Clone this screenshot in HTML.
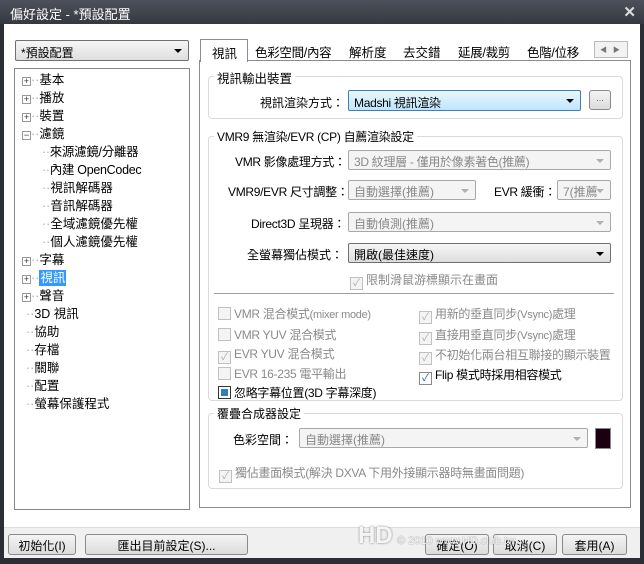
<!DOCTYPE html>
<html><head><meta charset="utf-8"><style>
*{box-sizing:border-box;margin:0;padding:0}
body{width:644px;height:564px;overflow:hidden;background:#2b2e35;font-family:"Liberation Sans","Noto Sans CJK TC",sans-serif;font-size:12px;color:#000;position:relative}
.a{position:absolute;white-space:nowrap}
.n{letter-spacing:-0.3px}
#title{left:0;top:0;width:644px;height:24px;background:linear-gradient(#4d515b,#353840);color:#fff;font-size:13px;padding:4px 0 0 10px}
#inner{left:4px;top:24px;width:636px;height:534px;background:#fff}
#bot{left:4px;top:527px;width:636px;height:31px;background:#f0f0f0;border-top:1px solid #dcdcdc}
.combo{border:1px solid #a8a8a8;border-radius:2px;background:#f4f4f4;padding:2px 5px;color:#888;height:20px}
.combo:after{content:"";position:absolute;right:6px;top:8px;border:4px solid transparent;border-top:4px solid #b0b0b0}
.combo.on{color:#000;border-color:#707070;background:linear-gradient(#f6f6f6,#dedede)}
.combo.on:after{border-top-color:#000}
.grp{border:1px solid #dadada;border-radius:4px}
.gl{background:#fff;padding:0 3px}
.btn{border:1px solid #8a8a8a;border-radius:3px;background:linear-gradient(#f4f4f4,#dcdcdc);text-align:center;height:20px;padding-top:2px}
.cb{width:13px;height:13px;border:1px solid #c0c0c0;background:#f4f4f4;display:inline-block;vertical-align:-2px;margin-right:3px;position:relative;font-size:10px;line-height:11px;text-align:center;color:#aaa;letter-spacing:0}
.g{color:#8a8a8a}
.tree{font-size:12.5px}
.pm{width:9px;height:9px;border:1px solid #999;display:inline-block;font-size:9px;line-height:7px;text-align:center;color:#333;background:#fff}
</style></head><body>
<div class="a" id="title">偏好設定 - *預設配置</div>
<div class="a" style="right:8px;top:3px;color:#ddd;font-size:15px;font-weight:bold">✕</div>
<div class="a" id="inner"></div>
<div class="a" id="bot"></div>

<div class="a combo on" style="left:15px;top:40px;width:174px;height:21px;padding-top:3px">*預設配置</div>
<div class="a" style="left:14px;top:68px;width:176px;height:442px;border:1px solid #828790;background:#fff"></div>
<div class="a tree" style="left:22px;top:71px;line-height:18px">
<div><span class="pm">+</span><span style="color:#aaa">··</span>基本</div>
<div><span class="pm">+</span><span style="color:#aaa">··</span>播放</div>
<div><span class="pm">+</span><span style="color:#aaa">··</span>裝置</div>
<div><span class="pm">−</span><span style="color:#aaa">··</span>濾鏡</div>
<div style="padding-left:20px" class="n"><span style="color:#aaa">··</span>來源濾鏡/分離器</div>
<div style="padding-left:20px" class="n"><span style="color:#aaa">··</span>內建 OpenCodec</div>
<div style="padding-left:20px"><span style="color:#aaa">··</span>視訊解碼器</div>
<div style="padding-left:20px"><span style="color:#aaa">··</span>音訊解碼器</div>
<div style="padding-left:20px"><span style="color:#aaa">··</span>全域濾鏡優先權</div>
<div style="padding-left:20px"><span style="color:#aaa">··</span>個人濾鏡優先權</div>
<div><span class="pm">+</span><span style="color:#aaa">··</span>字幕</div>
<div><span class="pm">+</span><span style="color:#aaa">··</span><span style="background:#3399ff;color:#fff;display:inline-block;line-height:16px;padding:0 1px">視訊</span></div>
<div><span class="pm">+</span><span style="color:#aaa">··</span>聲音</div>
<div style="padding-left:4px"><span style="color:#aaa">··</span>3D 視訊</div>
<div style="padding-left:4px"><span style="color:#aaa">··</span>協助</div>
<div style="padding-left:4px"><span style="color:#aaa">··</span>存檔</div>
<div style="padding-left:4px"><span style="color:#aaa">··</span>關聯</div>
<div style="padding-left:4px"><span style="color:#aaa">··</span>配置</div>
<div style="padding-left:4px"><span style="color:#aaa">··</span>螢幕保護程式</div>
</div>

<!-- tabs -->
<div class="a" style="left:199px;top:60px;width:432px;height:448px;border:1px solid #898c95;background:#fff"></div>
<div class="a" style="left:200px;top:39px;width:48px;height:23px;border:1px solid #898c95;border-bottom:none;background:#fff;padding:3px 0 0 11px;font-size:12.5px">視訊</div>
<div class="a n" style="left:255px;top:42px;font-size:12.5px">色彩空間/內容</div>
<div class="a" style="left:349px;top:42px;font-size:12.5px">解析度</div>
<div class="a" style="left:403px;top:42px;font-size:12.5px">去交錯</div>
<div class="a n" style="left:458px;top:42px;font-size:12.5px">延展/裁剪</div>
<div class="a n" style="left:527px;top:42px;font-size:12.5px">色階/位移</div>
<div class="a" style="left:594px;top:41px;width:34px;height:17px;border:1px solid #bbb;background:#f2f2f2;font-size:7px;color:#777;padding:3px 0 0 5px">◀ &nbsp; ▶</div>

<!-- group1 -->
<div class="a grp" style="left:208px;top:76px;width:415px;height:43px"></div>
<div class="a gl" style="left:214px;top:68px;font-size:12.5px">視訊輸出裝置</div>
<div class="a" style="left:260px;top:94px">視訊渲染方式：</div>
<div class="a combo on n" style="left:348px;top:90px;width:233px;height:21px;border-color:#3c7fb1;background:linear-gradient(#eaf6fd,#bee6fd);color:#000;padding-top:3px">Madshi 視訊渲染</div>
<div class="a btn" style="left:589px;top:90px;width:22px;color:#666;font-size:9px">...</div>

<!-- group2 -->
<div class="a grp" style="left:208px;top:136px;width:415px;height:265px"></div>
<div class="a gl n" style="left:214px;top:128px">VMR9 無渲染/EVR (CP) 自薦渲染設定</div>
<div class="a n" style="left:235px;top:153px">VMR 影像處理方式：</div>
<div class="a combo n" style="left:348px;top:150px;width:263px">3D 紋理層 - 僅用於像素著色(推薦)</div>
<div class="a n" style="left:228px;top:183px">VMR9/EVR 尺寸調整：</div>
<div class="a combo" style="left:348px;top:180px;width:128px">自動選擇(推薦)</div>
<div class="a n" style="left:494px;top:183px">EVR 緩衝：</div>
<div class="a combo" style="left:557px;top:180px;width:54px">7(推薦</div>
<div class="a n" style="left:251px;top:215px">Direct3D 呈現器：</div>
<div class="a combo" style="left:348px;top:212px;width:263px">自動偵測(推薦)</div>
<div class="a" style="left:247px;top:246px">全螢幕獨佔模式：</div>
<div class="a combo on" style="left:348px;top:243px;width:263px">開啟(最佳速度)</div>
<div class="a g" style="left:350px;top:271px"><span class="cb">✓</span>限制滑鼠游標顯示在畫面</div>
<div class="a" style="left:214px;top:293px;width:400px;height:1px;background:#a0a0a0"></div>
<div class="a g n" style="left:218px;top:305px;line-height:19.5px">
<div><span class="cb"></span>VMR 混合模式<span style="font-size:11px">(mixer mode)</span></div>
<div><span class="cb"></span>VMR YUV 混合模式</div>
<div><span class="cb">✓</span>EVR YUV 混合模式</div>
<div><span class="cb"></span>EVR 16-235 電平輸出</div>
<div style="color:#000"><span class="cb" style="border-color:#333;background:#2f7fb8;box-shadow:inset 0 0 0 2px #fff"></span>忽略字幕位置(3D 字幕深度)</div>
</div>
<div class="a g n" style="left:419px;top:305px;line-height:19.5px">
<div><span class="cb">✓</span>用新的垂直同步<span style="font-size:11px">(Vsync)</span>處理</div>
<div><span class="cb">✓</span>直接用垂直同步<span style="font-size:11px">(Vsync)</span>處理</div>
<div><span class="cb">✓</span>不初始化兩台相互聯接的顯示裝置</div>
<div style="color:#000"><span class="cb" style="border-color:#888;color:#2050a0;background:#fff">✓</span>Flip 模式時採用相容模式</div>
</div>

<!-- group3 -->
<div class="a grp" style="left:208px;top:413px;width:415px;height:76px"></div>
<div class="a gl" style="left:214px;top:405px">覆疊合成器設定</div>
<div class="a" style="left:233px;top:431px">色彩空間：</div>
<div class="a combo" style="left:299px;top:428px;width:289px">自動選擇(推薦)</div>
<div class="a" style="left:595px;top:428px;width:16px;height:21px;border:1px solid #888;background:#1a0010"></div>
<div class="a g n" style="left:219px;top:464px"><span class="cb">✓</span>獨佔畫面模式(解決 DXVA 下用外接顯示器時無畫面問題)</div>

<!-- buttons -->
<div class="a btn" style="left:8px;top:534px;width:68px;height:21px">初始化(I)</div>
<div class="a btn" style="left:85px;top:534px;width:163px;height:21px">匯出目前設定(S)...</div>
<div class="a btn" style="left:425px;top:534px;width:64px;height:21px">確定(O)</div>
<div class="a btn" style="left:493px;top:534px;width:64px;height:21px">取消(C)</div>
<div class="a btn" style="left:562px;top:534px;width:65px;height:21px">套用(A)</div>
<div class="a" style="left:358px;top:522px;font-size:24px;font-weight:bold;color:rgba(255,255,255,.9);text-shadow:0 0 2px #777">HD</div>
<div class="a" style="left:397px;top:535px;font-size:11px;color:rgba(255,255,255,.9);text-shadow:0 0 1px #666">© 2010 www.HD.club.tw</div>
</body></html>
